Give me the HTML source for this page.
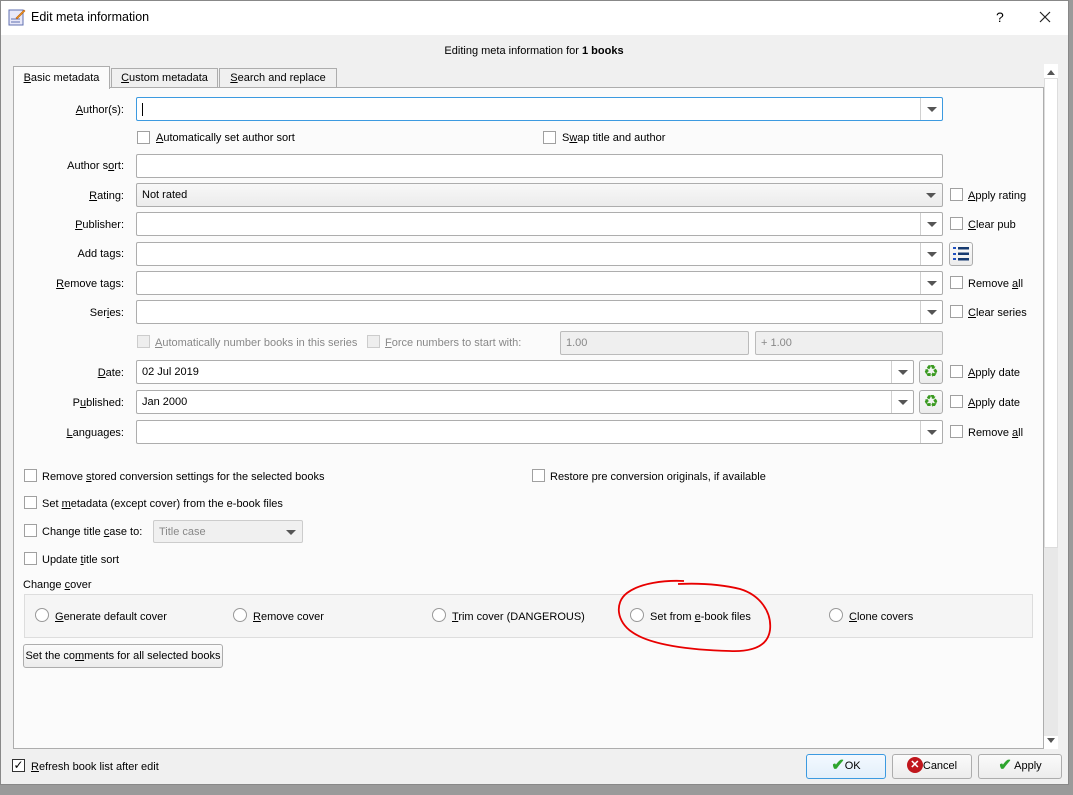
<!DOCTYPE html>
<html><head><meta charset="utf-8"><style>
*{box-sizing:border-box}
body{margin:0;width:1073px;height:795px;overflow:hidden;background:#9a9a9a;font-family:"Liberation Sans",Arial,sans-serif;font-size:11px;color:#000;position:relative}
.a{position:absolute;white-space:nowrap}
.lbl{position:absolute;text-align:right;width:120px;left:4px;line-height:14px;white-space:nowrap}
.inp{position:absolute;background:#fff;border:1px solid #adadad;border-radius:2px;height:24px;padding-left:5px;line-height:22px;white-space:nowrap}
.dd{position:absolute;right:0;top:0;width:22px;height:22px;border-left:1px solid #d0d0d0}
.dd:after{content:"";position:absolute;left:6px;top:9px;border-left:5px solid transparent;border-right:5px solid transparent;border-top:5px solid #555}
.cb{position:absolute;width:13px;height:13px;border:1px solid #a0a0a0;background:#fff}
.cbt{position:absolute;line-height:14px;white-space:nowrap}
.rad{position:absolute;width:14px;height:14px;border:1px solid #999;border-radius:50%;background:#fff}
.btn{position:absolute;border:1px solid #adadad;border-radius:3px;background:linear-gradient(#fbfbfb,#ececec);text-align:center;line-height:22px;white-space:nowrap}
u{text-decoration:underline}
.g{color:#888}
</style></head><body>
<div class="a" style="left:0;top:0;width:1069px;height:785px;background:#f0f0f0;border:1px solid #888"></div>
<div class="a" style="left:1px;top:1px;width:1067px;height:34px;background:#fff"></div>
<svg class="a" style="left:8px;top:8px" width="18" height="18" viewBox="0 0 18 18"><rect x="1" y="2" width="14" height="15" fill="#e8e8f8" stroke="#6070b0"/><line x1="3" y1="11" x2="12" y2="11" stroke="#6070b0"/><line x1="3" y1="14" x2="12" y2="14" stroke="#6070b0"/><path d="M8 10 L16 2 L17 3 L9 11 Z" fill="#f0a020" stroke="#c06010" stroke-width=".6"/></svg>
<div class="a" style="left:31px;top:10px;font-size:12.5px">Edit meta information</div>
<div class="a" style="left:996px;top:9px;font-size:14px">?</div>
<svg class="a" style="left:1039px;top:11px" width="12" height="12"><path d="M1 1L11 11M11 1L1 11" stroke="#222" stroke-width="1.2"/></svg>
<div class="a" style="left:0;width:1068px;top:45px;text-align:center">Editing meta information for <b>1 books</b></div>
<div class="a" style="left:13px;top:66px;width:97px;height:23px;background:#fbfbfb;border:1px solid #adadad;border-bottom:none;text-align:center;line-height:22px;z-index:2"><u>B</u>asic metadata</div>
<div class="a" style="left:111px;top:68px;width:107px;height:20px;background:#f0f0f0;border:1px solid #adadad;text-align:center;line-height:19px"><u>C</u>ustom metadata</div>
<div class="a" style="left:219px;top:68px;width:118px;height:20px;background:#f0f0f0;border:1px solid #adadad;text-align:center;line-height:19px"><u>S</u>earch and replace</div>
<div class="a" style="left:13px;top:87px;width:1031px;height:662px;background:#fbfbfb;border:1px solid #adadad"></div>
<div class="a" style="left:1044px;top:64px;width:14px;height:685px;background:#fff"></div>
<div class="a" style="left:1047px;top:70px;border-left:4px solid transparent;border-right:4px solid transparent;border-bottom:5px solid #555"></div>
<div class="a" style="left:1044px;top:78px;width:14px;height:470px;background:#fff;border:1px solid #ddd"></div>
<div class="a" style="left:1044px;top:548px;width:14px;height:188px;background:#e8e8e8"></div>
<div class="a" style="left:1047px;top:738px;border-left:4px solid transparent;border-right:4px solid transparent;border-top:5px solid #555"></div>

<div class="lbl" style="top:103px"><u>A</u>uthor(s):</div>
<div class="inp" style="left:136px;top:97px;width:807px;border-color:#3c9ae0"><span style="display:inline-block;width:1px;height:13px;background:#000;vertical-align:middle"></span><div class="dd"></div></div>
<div class="cb" style="left:137px;top:131px"></div><div class="cbt" style="left:156px;top:131px"><u>A</u>utomatically set author sort</div>
<div class="cb" style="left:543px;top:131px"></div><div class="cbt" style="left:562px;top:131px">S<u>w</u>ap title and author</div>

<div class="lbl" style="top:159px">Author s<u>o</u>rt:</div>
<div class="inp" style="left:136px;top:154px;width:807px"></div>

<div class="lbl" style="top:189px"><u>R</u>ating:</div>
<div class="inp" style="left:136px;top:183px;width:807px;background:linear-gradient(#f8f8f8,#ececec)">Not rated<div class="dd" style="border:none"></div></div>
<div class="cb" style="left:950px;top:188px"></div><div class="cbt" style="left:968px;top:189px"><u>A</u>pply rating</div>

<div class="lbl" style="top:218px"><u>P</u>ublisher:</div>
<div class="inp" style="left:136px;top:212px;width:807px"><div class="dd"></div></div>
<div class="cb" style="left:950px;top:217px"></div><div class="cbt" style="left:968px;top:218px"><u>C</u>lear pub</div>

<div class="lbl" style="top:247px">Add ta<u>g</u>s:</div>
<div class="inp" style="left:136px;top:242px;width:807px"><div class="dd"></div></div>
<div class="btn" style="left:949px;top:242px;width:24px;height:24px"><svg width="18" height="18" style="margin-top:2px"><g fill="#1e4fc0"><rect x="1" y="2" width="3" height="2"/><rect x="1" y="8" width="3" height="2"/><rect x="1" y="13" width="3" height="2"/></g><g fill="#163a70"><rect x="6" y="2" width="11" height="2.5"/><rect x="6" y="7.5" width="11" height="2.5"/><rect x="6" y="13" width="11" height="2.5"/></g></svg></div>

<div class="lbl" style="top:277px"><u>R</u>emove tags:</div>
<div class="inp" style="left:136px;top:271px;width:807px"><div class="dd"></div></div>
<div class="cb" style="left:950px;top:276px"></div><div class="cbt" style="left:968px;top:277px">Remove <u>a</u>ll</div>

<div class="lbl" style="top:306px">Ser<u>i</u>es:</div>
<div class="inp" style="left:136px;top:300px;width:807px"><div class="dd"></div></div>
<div class="cb" style="left:950px;top:305px"></div><div class="cbt" style="left:968px;top:306px"><u>C</u>lear series</div>

<div class="cb" style="left:137px;top:335px;background:#eee;border-color:#ccc"></div><div class="cbt g" style="left:155px;top:336px"><u>A</u>utomatically number books in this series</div>
<div class="cb" style="left:367px;top:335px;background:#eee;border-color:#ccc"></div><div class="cbt g" style="left:385px;top:336px"><u>F</u>orce numbers to start with:</div>
<div class="inp g" style="left:560px;top:331px;width:189px;background:#efefef;border-color:#bbb">1.00</div>
<div class="inp g" style="left:755px;top:331px;width:188px;background:#efefef;border-color:#bbb">+ 1.00</div>

<div class="lbl" style="top:366px"><u>D</u>ate:</div>
<div class="inp" style="left:136px;top:360px;width:778px">02 Jul 2019<div class="dd"></div></div>
<div class="btn" style="left:919px;top:360px;width:24px;height:24px;color:#3a9a20;font-size:17px;line-height:22px">♻</div>
<div class="cb" style="left:950px;top:365px"></div><div class="cbt" style="left:968px;top:366px"><u>A</u>pply date</div>

<div class="lbl" style="top:396px">P<u>u</u>blished:</div>
<div class="inp" style="left:136px;top:390px;width:778px">Jan 2000<div class="dd"></div></div>
<div class="btn" style="left:919px;top:390px;width:24px;height:24px;color:#3a9a20;font-size:17px;line-height:22px">♻</div>
<div class="cb" style="left:950px;top:395px"></div><div class="cbt" style="left:968px;top:396px"><u>A</u>pply date</div>

<div class="lbl" style="top:426px"><u>L</u>anguages:</div>
<div class="inp" style="left:136px;top:420px;width:807px"><div class="dd"></div></div>
<div class="cb" style="left:950px;top:425px"></div><div class="cbt" style="left:968px;top:426px">Remove <u>a</u>ll</div>

<div class="cb" style="left:24px;top:469px"></div><div class="cbt" style="left:42px;top:470px">Remove <u>s</u>tored conversion settings for the selected books</div>
<div class="cb" style="left:532px;top:469px"></div><div class="cbt" style="left:550px;top:470px">Restore pre conversion originals, if available</div>
<div class="cb" style="left:24px;top:496px"></div><div class="cbt" style="left:42px;top:497px">Set <u>m</u>etadata (except cover) from the e-book files</div>
<div class="cb" style="left:24px;top:524px"></div><div class="cbt" style="left:42px;top:525px">Change title <u>c</u>ase to:</div>
<div class="inp g" style="left:153px;top:520px;width:150px;height:23px;background:#f0f0f0;border-color:#ccc">Title case<div class="dd" style="border:none"></div></div>
<div class="cb" style="left:24px;top:552px"></div><div class="cbt" style="left:42px;top:553px">Update <u>t</u>itle sort</div>
<div class="cbt" style="left:23px;top:578px">Change <u>c</u>over</div>
<div class="a" style="left:24px;top:594px;width:1009px;height:44px;background:#f5f5f5;border:1px solid #ddd"></div>
<div class="rad" style="left:35px;top:608px"></div><div class="cbt" style="left:55px;top:610px"><u>G</u>enerate default cover</div>
<div class="rad" style="left:233px;top:608px"></div><div class="cbt" style="left:253px;top:610px"><u>R</u>emove cover</div>
<div class="rad" style="left:432px;top:608px"></div><div class="cbt" style="left:452px;top:610px"><u>T</u>rim cover (DANGEROUS)</div>
<div class="rad" style="left:630px;top:608px"></div><div class="cbt" style="left:650px;top:610px">Set from <u>e</u>-book files</div>
<div class="rad" style="left:829px;top:608px"></div><div class="cbt" style="left:849px;top:610px"><u>C</u>lone covers</div>
<div class="btn" style="left:23px;top:644px;width:200px;height:24px">Set the co<u>m</u>ments for all selected books</div>
<svg class="a" style="left:0;top:0" width="1073" height="795"><path d="M684 581 C665 580 640 583 627 593 C614 603 617 622 632 632 C650 645 690 650 730 651 C755 652 768 645 770 630 C772 612 760 595 740 589 C720 584 700 583 678 584" fill="none" stroke="#e80000" stroke-width="1.8"/></svg>

<div class="a" style="left:12px;top:759px;width:13px;height:13px;border:1px solid #333;background:#fff;font-size:12px;line-height:11px;text-align:center">✓</div>
<div class="cbt" style="left:31px;top:760px"><u>R</u>efresh book list after edit</div>
<div class="btn" style="left:806px;top:754px;width:80px;height:25px;border-color:#3c9ae0;background:linear-gradient(#f3f9ff,#e3effa)"><span style="color:#2ea52e;font-size:16px;font-weight:bold;vertical-align:-1px">✔</span>OK</div>
<div class="btn" style="left:892px;top:754px;width:80px;height:25px"><span style="display:inline-block;width:16px;height:16px;border-radius:50%;background:#c0161c;color:#fff;font-size:11px;line-height:16px;font-weight:bold;vertical-align:middle;margin-top:-2px">✕</span>Cancel</div>
<div class="btn" style="left:978px;top:754px;width:84px;height:25px"><span style="color:#2ea52e;font-size:16px;font-weight:bold;vertical-align:-1px">✔</span> Apply</div>
</body></html>
